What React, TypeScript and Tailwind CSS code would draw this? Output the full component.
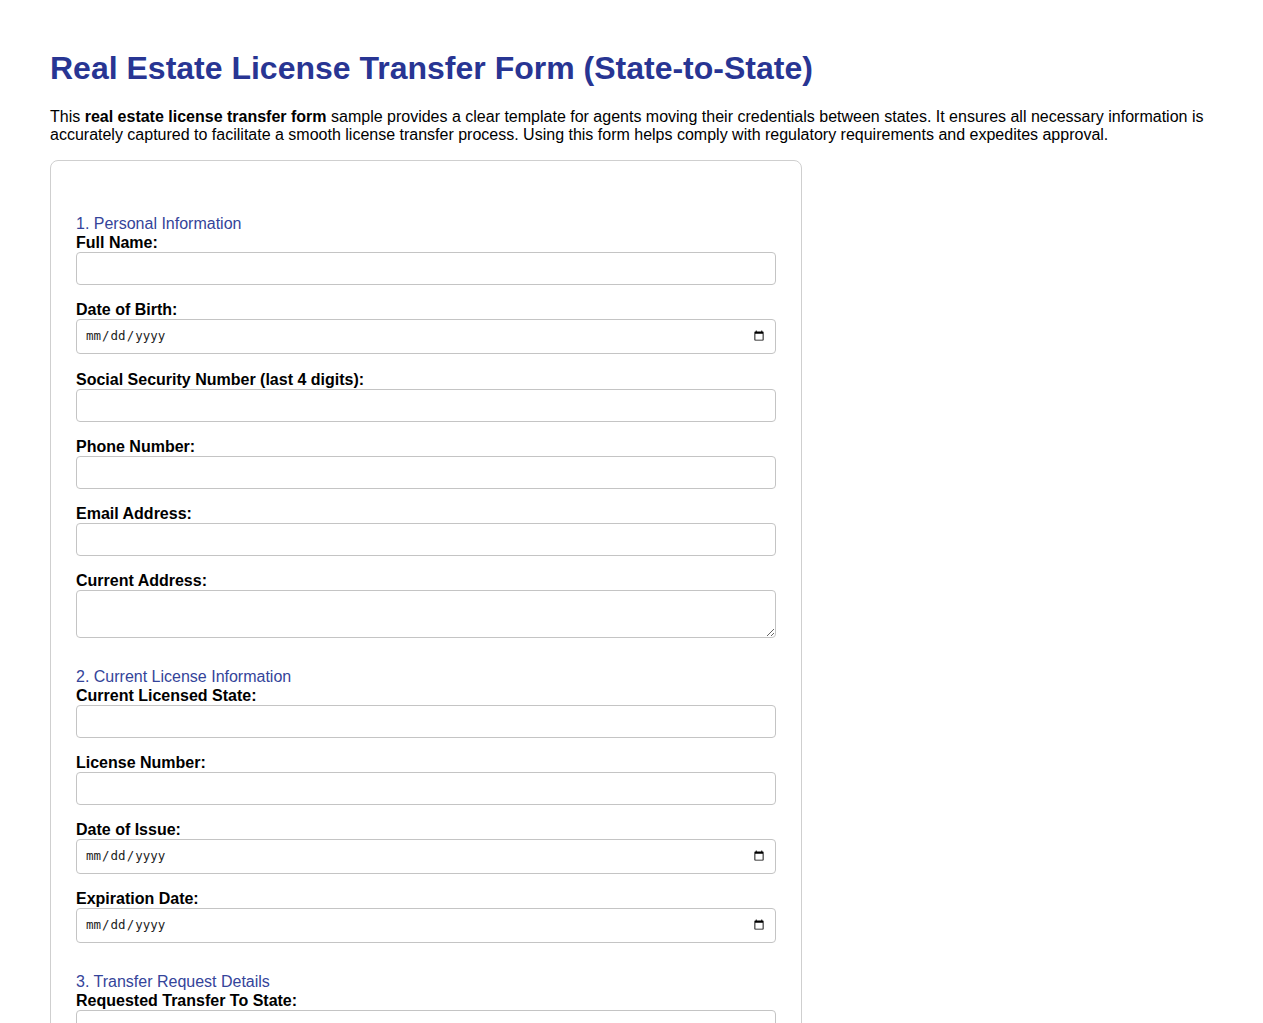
import React from "react";

type Field = { label: string; type: "text" | "date" | "email" | "tel" | "textarea"; extra?: boolean };

const sections: { title: string; fields: Field[] }[] = [
  {
    title: "1. Personal Information",
    fields: [
      { label: "Full Name:", type: "text" },
      { label: "Date of Birth:", type: "date", extra: true },
      { label: "Social Security Number (last 4 digits):", type: "text" },
      { label: "Phone Number:", type: "tel" },
      { label: "Email Address:", type: "email" },
      { label: "Current Address:", type: "textarea" },
    ],
  },
  {
    title: "2. Current License Information",
    fields: [
      { label: "Current Licensed State:", type: "text" },
      { label: "License Number:", type: "text" },
      { label: "Date of Issue:", type: "date" },
      { label: "Expiration Date:", type: "date" },
    ],
  },
  {
    title: "3. Transfer Request Details",
    fields: [
      { label: "Requested Transfer To State:", type: "text" },
      { label: "Reason for Transfer:", type: "textarea" },
      { label: "Anticipated Transfer Date:", type: "date" },
    ],
  },
];

function Input({ f }: { f: Field }) {
  const base = "block w-[700px] border border-[#c4c4c4] rounded-[4px] bg-white outline-none";
  const mb = f.extra ? "mb-[16px]" : "mb-[15px]";
  if (f.type === "textarea") {
    return <textarea className={`${base} ${mb} h-[48px] p-2 text-[13.33px] font-['Liberation_Mono',monospace]`} />;
  }
  if (f.type === "date") {
    return (
      <input
        type="date"
        className={`${base} ${mb} h-[35px] px-2 text-[12.5px] text-[#222] font-['DejaVu_Sans_Mono',monospace]`}
      />
    );
  }
  return (
    <input
      type={f.type}
      className={`${base} ${mb} h-[33px] px-2 text-[13.33px] font-['Liberation_Sans',Arial,sans-serif]`}
    />
  );
}

export default function App() {
  return (
    <div className="bg-white min-h-screen pt-[50px] pl-[50px] pr-[50px] pb-10 font-['Liberation_Sans',Arial,sans-serif] text-black">
      <h1 className="text-[32px] leading-[37px] font-bold text-[#283593] mb-[21px]">
        Real Estate License Transfer Form (State-to-State)
      </h1>
      <p className="text-[16px] leading-[18px] mb-[16px]">
        This <strong>real estate license transfer form</strong> sample provides a clear template for agents moving their
        credentials between states. It ensures all necessary information is accurately captured to facilitate a smooth
        license transfer process. Using this form helps comply with regulatory requirements and expedites approval.
      </p>
      <form className="w-[752px] border border-[#cfcfcf] rounded-[8px] p-[25px] pt-[54px]">
        {sections.map((s, i) => (
          <fieldset key={s.title} className={i > 0 ? "mt-[15px]" : ""}>
            <div className="text-[16px] leading-[18px] text-[#34449a]">{s.title}</div>
            {s.fields.map((f) => (
              <div key={f.label}>
                <label className="block pt-[1px] text-[16px] leading-[18px] font-bold">{f.label}</label>
                <Input f={f} />
              </div>
            ))}
          </fieldset>
        ))}
      </form>
    </div>
  );
}
